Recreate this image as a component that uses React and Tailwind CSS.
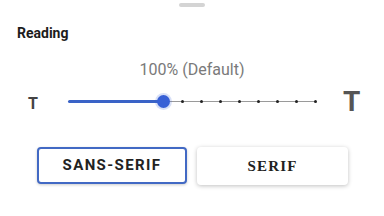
import React from 'react';

const ticks = Array.from({ length: 14 }, (_, i) => i);

const App = () => {
  const value = 5;
  return (
    <div className="w-[384px] h-[216px] bg-white relative overflow-hidden" style={{ fontFamily: 'Roboto, "Liberation Sans", sans-serif' }}>
      <div className="flex justify-center pt-[3px]">
        <div className="w-[26px] h-[4px] rounded-full bg-[#d4d4d4]" />
      </div>
      <h3 className="pl-[17px] mt-[18px] text-[14px] leading-[16px] font-bold text-[#1c1c1c]">Reading</h3>
      <p className="mt-[20px] text-center text-[16px] leading-[18px] text-[#7a7a7a]">100% (Default)</p>

      <div className="flex items-center mt-[13px] h-[20px]">
        <span className="w-[68px] pl-[28px] text-[16px] font-bold text-[#444] leading-none mt-[4px]">T</span>
        <div className="relative w-[247px] h-[20px]">
          <div className="absolute left-0 right-0 top-[9px] h-[1px] bg-[#9a9a9a]" />
          <div className="absolute left-0 top-[8px] h-[3px] w-[95px] bg-[#3a63c7] rounded-full" />
          {ticks.map((i) =>
            i > value ? (
              <div key={i} className="absolute top-[8px] w-[3px] h-[3px] rounded-full bg-[#222]" style={{ left: i * 19 - 1 }} />
            ) : null
          )}
          <div className="absolute top-[3px] w-[13px] h-[13px] rounded-full bg-[#3760d6] shadow-[0_0_0_2px_rgba(59,99,214,0.2)]" style={{ left: value * 19 - 6 }} />
        </div>
        <span className="ml-[28px] text-[28px] font-bold text-[#555] leading-none">T</span>
      </div>

      <div className="flex gap-[10px] pl-[37px] mt-[35px]">
        <button className="w-[150px] h-[37px] rounded-[4px] border-2 border-[#4269c4] bg-white shadow-[0_1px_3px_rgba(0,0,0,0.2)] text-[15px] font-bold tracking-[1.4px] text-[#222]">
          SANS-SERIF
        </button>
        <button
          className="w-[151px] h-[38px] rounded-[4px] bg-white shadow-[0_1px_4px_rgba(0,0,0,0.25)] text-[15px] font-bold tracking-[1.2px] text-[#222]"
          style={{ fontFamily: '"Liberation Serif", "DejaVu Serif", serif' }}
        >
          SERIF
        </button>
      </div>
    </div>
  );
};

export default App;
